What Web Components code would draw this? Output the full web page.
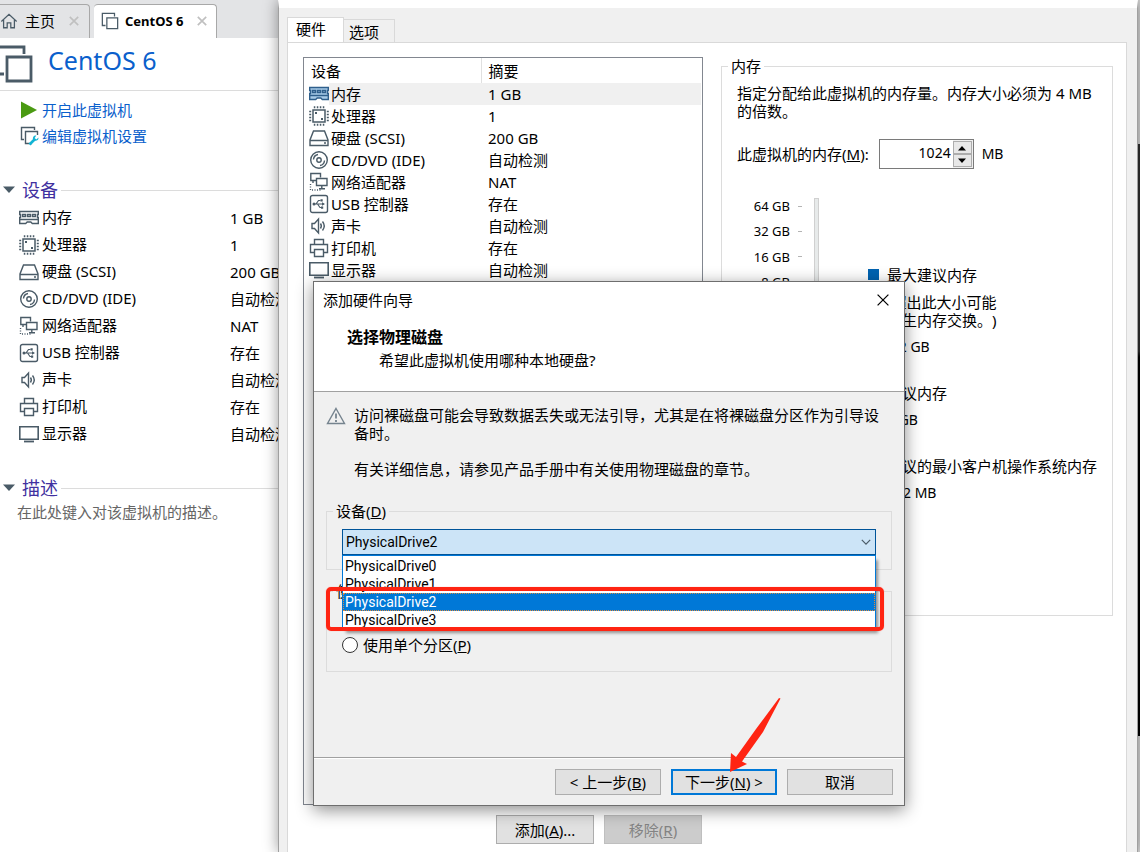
<!DOCTYPE html>
<html lang="zh-CN">
<head>
<meta charset="utf-8">
<title>CentOS 6</title>
<style>
  html, body { margin: 0; height: 100%; overflow: hidden; }
  body {
    font: 15px/18px "Noto Sans", "Noto Sans CJK SC", sans-serif;
    text-spacing-trim: space-all;
    color: #000;
    background: #fff;
  }
</style>
</head>
<body>
<vm-workstation></vm-workstation>

<script>
const ICONS = {
  home: '<path d="M1.5 10.500 10 2.500l8.500 8M4 9v8.500h4v-5.500h4v5.500h4V9" />',
  vm: '<path d="M5 15H1.500V1.500H15V5"/><path d="M6.500 6.500h12v12h-12z"/>',
  play: '<path fill="#4a9a12" stroke="none" d="M1 1.500v17L17 10z"/>',
  edit: '<path d="M4 13.500H1.500v-12h13V4"/><path d="M12 17.500H5.500v-12h12V9"/><path stroke="#12b4d4" stroke-width="2.600" d="M9.500 18.500l5-5"/><path fill="#12b4d4" stroke="none" d="M18.500 11.500l-2.200 2-1.600-1.500 1.600-2.500c-2.500-.3-4 2-3.200 4 .8 1.800 5.800 2 5.400-2z"/>',
  memory: '<path fill="var(--icon-fill, none)" d="M.7 3.500h18.600v3h-.8v3h.8v6h-6l-1.500-1.500h-3.600l-1.500 1.500h-6v-6h.8v-3h-.8z"/><path d="M3.500 6.500h3v2h-3zM8.500 6.500h3v2h-3zM13.500 6.500h3v2h-3zM1 11.500h18"/>',
  cpu: '<path stroke-width="1.500" d="M4 4h12v12H4z"/><path stroke-width="2" stroke-dasharray="1.500 1.500" d="M4.800 1.200h10.500M4.800 18.800h10.500M1.200 4.800v10.500M18.800 4.800v10.500"/><path stroke="none" fill="currentColor" d="M6 6h2v2H6zM12 12h2v2h-2z"/>',
  disk: '<path d="M4.500 3h11L19 12v5.500H1V12z"/><path d="M1 12.500h18M15 15h2"/>',
  disc: '<circle cx="10" cy="10" r="8.300"/><circle cx="10" cy="10" r="2.200"/><path d="M4.500 9.500c.2-2.500 2-4.600 4.500-5M15.500 10.500c-.2 2.500-2 4.600-4.500 5"/>',
  network: '<path d="M8 8.500H1.800V1.500h9.700v4"/><path d="M7.500 6.500h10.500v7H7.500zM12.800 13.500v3M10 16.800h6M4 8.500v2.500"/><path stroke-dasharray="1 1.500" d="M1.500 12v6H12"/>',
  usb: '<rect x="1.500" y="1.500" width="17" height="17" rx="2"/><path stroke-width="1.200" d="M4.500 10h10M7 10l2.500-3.500h2M8.500 10l2.500 3.500h1.500"/><path stroke="none" fill="currentColor" d="M13 8.300l3 1.700-3 1.700zM11.500 5.300h2.200v2.200h-2.200zM12 12.500h2.200v2.200H12z"/><circle cx="5" cy="10" r=".8"/>',
  sound: '<path d="M3 7.500h2.500l4-4.500v14l-4-4.500H3zM11.500 7.500c1 1.500 1 3.500 0 5M13.500 5.500c2.200 2.800 2.200 6.200 0 9"/>',
  printer: '<path d="M5.500 6V1.500h9V6M5 14.500H1.500v-8h17v8H15M5.500 11.500h9v7h-9z"/>',
  display: '<path stroke-width="1.600" d="M.8 2.800h18.400v12.400H.8z"/><path stroke-width="1.800" d="M5 17.500h10"/>',
  warning: '<path d="M10 2.500 18.500 17.500H1.500z"/><path stroke-width="1.800" d="M10 7.500v5M10 14v2"/>',
  close: '<path d="M4 4l12 12M16 4 4 16"/>',
  chevron: '<path d="M3 6.500l7 7 7-7"/>',
  caret: '<path fill="currentColor" stroke="none" d="M0 4h20L10 15z"/>'
};

const DEVICES = [
  ['memory', '内存', '1 GB'],
  ['cpu', '处理器', '1'],
  ['disk', '硬盘 (SCSI)', '200 GB'],
  ['disc', 'CD/DVD (IDE)', '自动检测'],
  ['network', '网络适配器', 'NAT'],
  ['usb', 'USB 控制器', '存在'],
  ['sound', '声卡', '自动检测'],
  ['printer', '打印机', '存在'],
  ['display', '显示器', '自动检测']
];

const SCALE = ['64 GB', '32 GB', '16 GB', '8 GB'];

// Base class: opens the shadow root and fills it from render()
class VmElement extends HTMLElement {
  constructor() {
    super();
    this.attachShadow({ mode: 'open' });
  }

  connectedCallback() {
    this.shadowRoot.innerHTML = this.render();
  }
}

class VmIcon extends VmElement {
  render() {
    return `
      <style>
        :host { display: inline-block; flex: none; width: 20px; height: 20px; color: #4a5b67; }
        svg { display: block; width: 100%; height: 100%; stroke-width: var(--stroke, 1.4); }
      </style>
      <svg viewBox="0 0 20 20" fill="none" stroke="currentColor" aria-hidden="true">
        ${ICONS[this.getAttribute('name')]}
      </svg>
    `;
  }
}

class PushButton extends VmElement {
  render() {
    return `
      <style>
        :host { display: block; width: 106px; height: 26px; }
        button {
          width: 100%;
          height: 100%;
          padding: 0;
          border: 1px solid #adadad;
          background: #e1e1e1;
          font: inherit;
          color: #000;
        }
        :host([primary]) button { border: 2px solid #0078d7; }
        button:disabled { background: #ccc; border-color: #bfbfbf; color: #838383; }
      </style>
      <button type="button" ${this.hasAttribute('disabled') ? 'disabled' : ''}><slot></slot></button>
    `;
  }
}

class GroupBox extends VmElement {
  render() {
    return `
      <style>
        :host { display: block; min-width: 0; }
        fieldset {
          min-width: 0;
          margin: 0;
          padding: 9px 15px 14px;
          border: 1px solid #dcdcdc;
        }
        legend { margin-left: -9px; padding: 0 3px; }
      </style>
      <fieldset>
        <legend><slot name="legend"></slot></legend>
        <slot></slot>
      </fieldset>
    `;
  }
}

class DeviceTable extends VmElement {
  render() {
    const head = this.hasAttribute('header')
      ? '<thead><tr><th>设备</th><th>摘要</th></tr></thead>' : '';
    const rows = DEVICES.map(([icon, name, value], i) => `
      <tr class="${i === 0 ? 'first' : ''}">
        <td><div><vm-icon name="${icon}"></vm-icon><span>${name}</span></div></td>
        <td><span>${value}</span></td>
      </tr>`).join('');
    return `
      <style>
        :host { display: block; }
        table { width: 100%; border-collapse: collapse; table-layout: fixed; }
        th, td { padding: 0; height: var(--row, 27px); text-align: left; font-weight: normal; white-space: nowrap; }
        th { height: 25px; padding-left: 7px; }
        th:first-child { border-right: 1px solid #e0e0e0; }
        tr > :first-child { width: var(--name-width, 230px); box-sizing: border-box; }
        td div { display: flex; align-items: center; height: var(--row, 27px); }
        td div span { flex: 1; padding-left: var(--gap, 3px); line-height: var(--row, 27px); }
        td:first-child { padding-left: var(--inset, 19px); }
        td + td { padding-left: var(--value-inset, 0); }
        :host([header]) .first { --icon-fill: #a9cbe8; }
        :host([header]) .first vm-icon { color: #2f5f8c; }
        :host([header]) .first div span, :host([header]) .first td + td { background: #f0f0f0; }
      </style>
      <table>${head}<tbody>${rows}</tbody></table>
    `;
  }
}

class VmTab extends VmElement {
  render() {
    return `
      <style>
        :host {
          display: flex;
          align-items: center;
          box-sizing: border-box;
          height: 34px;
          padding-bottom: 2px;
          border: 1px solid #a8a8a8;
          border-width: 1px 1px 0 0;
          border-radius: 0 4px 0 0;
          white-space: nowrap;
        }
        :host([active]) { background: #fff; border-radius: 4px 4px 0 0; font-weight: bold; font-size: 13px; }
        button { display: flex; margin-left: 12px; padding: 0; border: 0; background: none; }
        button vm-icon { --stroke: 2.400; width: 14px; height: 14px; color: #c0c0c0; }
      </style>
      <slot></slot>
      <button type="button" aria-label="关闭"><vm-icon name="close"></vm-icon></button>
    `;
  }
}

class VmSection extends VmElement {
  render() {
    return `
      <style>
        :host { display: block; margin-top: 28px; }
        summary {
          display: flex;
          align-items: center;
          gap: 7px;
          height: 26px;
          padding-left: 3px;
          margin-bottom: 1px;
          list-style: none;
          font-size: 18px;
          color: #4030a0;
        }
        summary vm-icon { width: 12px; height: 12px; }
        summary::after { content: ""; flex: 1; margin-left: -4px; border-top: 1px solid #dcdcdc; }
      </style>
      <details open>
        <summary><vm-icon name="caret"></vm-icon>${this.getAttribute('title')}</summary>
        <slot></slot>
      </details>
    `;
  }
}

class LibraryPane extends VmElement {
  render() {
    return `
      <style>
        :host { display: block; min-width: 0; }
        .tabs { display: flex; align-items: flex-end; gap: 4px; height: 38px; background: #e3e4e6; }
        .tabs vm-tab { padding-right: 7px; }
        .home { width: 90px; box-sizing: border-box; }
        .home vm-icon { width: 18px; height: 18px; margin-right: 7px; }
        .current { padding-left: 7px; }
        .current > vm-icon { width: 18px; height: 18px; margin-right: 6px; }
        header {
          display: flex;
          align-items: center;
          gap: 14px;
          height: 52px;
          border-bottom: 1px solid #dcdcdc;
          overflow: hidden;
        }
        header vm-icon { width: 40px; height: 40px; margin-left: -6px; }
        h1 { margin: 0 0 8px; font-size: 25px; font-weight: normal; line-height: 36px; color: #0a60cc; }
        nav { padding-top: 6px; }
        nav a {
          display: flex;
          align-items: center;
          gap: 2px;
          height: 26px;
          padding-left: 20px;
          color: #0a60cc;
          text-decoration: none;
        }
        p { margin: 0; padding-left: 17px; line-height: 20px; color: #666; }
      </style>
      <div class="tabs">
        <vm-tab class="home"><vm-icon name="home"></vm-icon>主页</vm-tab>
        <vm-tab class="current" active><vm-icon name="vm"></vm-icon>CentOS 6</vm-tab>
      </div>
      <header><vm-icon name="vm"></vm-icon><h1>CentOS 6</h1></header>
      <nav>
        <a href="#start"><vm-icon name="play"></vm-icon>开启此虚拟机</a>
        <a href="#edit"><vm-icon name="edit"></vm-icon>编辑虚拟机设置</a>
      </nav>
      <vm-section title="设备"><device-table></device-table></vm-section>
      <vm-section title="描述"><p>在此处键入对该虚拟机的描述。</p></vm-section>
    `;
  }
}

class MemoryPanel extends VmElement {
  render() {
    return `
      <style>
        :host { display: block; }
        p { margin: 0 0 19px; }
        .amount { display: flex; align-items: center; height: 30px; margin-bottom: 29px; }
        .spin {
          display: grid;
          grid-template-columns: 1fr 20px;
          box-sizing: border-box;
          width: 95px;
          height: 30px;
          margin: 0 8px 0 10px;
          border: 1px solid #7a7a7a;
        }
        .spin input {
          min-width: 0;
          padding: 0 2px 3px;
          border: 0;
          outline: 0;
          font: inherit;
          font-size: 14px;
          text-align: right;
        }
        .arrows { display: grid; grid-template-rows: 1fr 1fr; padding: 1px 1px 1px 0; background: #f0f0f0; }
        .arrows button {
          display: flex;
          align-items: center;
          justify-content: center;
          min-height: 0;
          padding: 0;
          border: 1px solid #adadad;
          background: #e8e8e8;
        }
        .arrows vm-icon { width: 8px; height: 8px; color: #000; }
        .arrows button:first-child vm-icon { transform: rotate(180deg); }
        .unit { font-size: 14px; }
        .chart { display: flex; align-items: flex-start; padding-bottom: 28px; }
        ol {
          display: flex;
          flex-direction: column;
          justify-content: space-between;
          height: 92px;
          width: 65px;
          margin: 0 12px 0 0;
          padding: 0;
          list-style: none;
          font-size: 13px;
        }
        li { display: flex; justify-content: flex-end; align-items: center; gap: 8px; height: 16px; }
        li::after { content: ""; width: 4px; height: 1px; background: #b4b4b4; }
        .track { box-sizing: border-box; width: 5px; height: 375px; border: 1px solid #d0d0d0; background: #e7eaea; }
        dl { flex: 1; margin: 0; padding: 68px 0 0 68px; white-space: nowrap; }
        dt { position: relative; }
        dt::before {
          content: "";
          position: absolute;
          left: -19px;
          top: 3px;
          width: 11px;
          height: 11px;
          background: var(--mark);
        }
        dd { margin: 9px 0 0; font-size: 14px; }
        dd.note { font-size: 15px; }
        dd + dt { margin-top: 28px; }
      </style>
      <group-box>
        <span slot="legend">内存</span>
        <p>指定分配给此虚拟机的内存量。内存大小必须为 4 MB 的倍数。</p>
        <div class="amount">
          <label for="size">此虚拟机的内存(<u>M</u>):</label>
          <div class="spin">
            <input id="size" type="text" inputmode="numeric" value="1024">
            <div class="arrows">
              <button type="button" aria-label="增加"><vm-icon name="caret"></vm-icon></button>
              <button type="button" aria-label="减少"><vm-icon name="caret"></vm-icon></button>
            </div>
          </div>
          <span class="unit">MB</span>
        </div>
        <div class="chart">
          <ol>${SCALE.map(text => `<li>${text}</li>`).join('')}</ol>
          <div class="track"></div>
          <dl>
            <dt style="--mark: #0063b1">最大建议内存</dt>
            <dd class="note">(超出此大小可能<br>发生内存交换。)</dd>
            <dd>6.2 GB</dd>
            <dt style="--mark: #5eb715">建议内存</dt>
            <dd>1 GB</dd>
            <dt style="--mark: #f5b800">建议的最小客户机操作系统内存</dt>
            <dd>512 MB</dd>
          </dl>
        </div>
      </group-box>
    `;
  }
}

class SettingsWindow extends VmElement {
  render() {
    return `
      <style>
        :host {
          display: flex;
          flex-direction: column;
          box-sizing: border-box;
          border: 1px solid #a0a0a0;
          border-width: 0 1px;
          border-top: 8px solid #fff;
          background: #f0f0f0;
          box-shadow: 0 0 14px rgba(0, 0, 0, .4);
          padding: 9px 10px 0 8px;
        }
        .tabs { display: flex; align-items: flex-end; height: 25px; }
        .tabs button {
          box-sizing: border-box;
          width: 51px;
          height: 23px;
          padding: 1px 8px 0 5px;
          border: 1px solid #d9d9d9;
          border-width: 1px 1px 0 0;
          background: #f0f0f0;
          font: inherit;
          color: #000;
          text-align: left;
          white-space: nowrap;
        }
        .tabs button[aria-selected=true] {
          width: 57px;
          height: 26px;
          margin-bottom: -1px;
          padding: 0 8px 3px;
          border-left-width: 1px;
          background: #fff;
        }
        .panel {
          flex: 1;
          display: grid;
          grid-template-columns: minmax(0, 400px) minmax(0, 1fr);
          gap: 18px;
          padding: 14px 13px 8px 15px;
          border: 1px solid #d9d9d9;
          border-bottom: 0;
          background: #fff;
        }
        .left { display: flex; flex-direction: column; gap: 10px; }
        device-table {
          --row: 22px;
          --name-width: 177px;
          --inset: 5px;
          --gap: 2px;
          --value-inset: 7px;
          flex: 1;
          padding-right: 1px;
          border: 1px solid #828790;
        }
        .actions { display: flex; justify-content: flex-end; gap: 10px; padding-right: 1px; }
        .actions push-button { width: 98px; height: 29px; }
      </style>
      <div class="tabs" role="tablist">
        <button type="button" role="tab" aria-selected="true">硬件</button>
        <button type="button" role="tab" aria-selected="false">选项</button>
      </div>
      <div class="panel">
        <div class="left">
          <device-table header></device-table>
          <div class="actions">
            <push-button>添加(<u>A</u>)...</push-button>
            <push-button disabled>移除(<u>R</u>)</push-button>
          </div>
        </div>
        <memory-panel></memory-panel>
      </div>
    `;
  }
}

class DrivePicker extends VmElement {
  render() {
    const drives = [0, 1, 2, 3].map(n => `PhysicalDrive${n}`);
    return `
      <style>
        :host { display: block; }
        .combo { position: relative; z-index: 1; font-family: Roboto, "Noto Sans", sans-serif; font-size: 14px; }
        select {
          display: block;
          appearance: none;
          box-sizing: border-box;
          width: 100%;
          height: 26px;
          padding: 0 3px;
          border: 1px solid #005499;
          border-radius: 0;
          background: #cce4f7;
          font: inherit;
          color: #000;
        }
        .combo > vm-icon { --stroke: 2; position: absolute; right: 4px; top: 7px; width: 12px; height: 12px; }
        ul {
          position: absolute;
          left: 0;
          right: 0;
          top: 26px;
          margin: 0;
          padding: 1px 0 0;
          border: 1px solid #0078d7;
          background: #fff;
          box-shadow: 3px 4px 3px -1px rgba(0, 0, 0, .4);
          list-style: none;
        }
        li { height: 18px; padding-left: 2px; }
        li[aria-selected=true] {
          background: #0078d7;
          color: #fff;
          outline: 1px dotted #e08a3c;
          outline-offset: -1px;
        }
        /* red frame over the last two drives */
        .mark {
          position: absolute;
          left: -16px;
          right: -8px;
          top: 58px;
          box-sizing: border-box;
          height: 44px;
          border: 4px solid #ff2412;
          border-radius: 5px;
          box-shadow: 0 0 1px #ff8a80;
        }
      </style>
      <group-box>
        <label slot="legend" for="drive">设备(<u>D</u>)</label>
        <div class="combo">
          <select id="drive">
            ${drives.map((d, i) => `<option ${i === 2 ? 'selected' : ''}>${d}</option>`).join('')}
          </select>
          <vm-icon name="chevron"></vm-icon>
          <ul role="listbox">
            ${drives.map((d, i) => `<li role="option" aria-selected="${i === 2}">${d}</li>`).join('')}
          </ul>
          <div class="mark"></div>
        </div>
      </group-box>
    `;
  }
}

class HardwareWizard extends VmElement {
  render() {
    return `
      <style>
        :host {
          display: flex;
          flex-direction: column;
          box-sizing: border-box;
          border: 1px solid #6e6e6e;
          background: #f0f0f0;
          box-shadow: 0 4px 16px rgba(0, 0, 0, .45);
        }
        header { padding-bottom: 22px; border-bottom: 1px solid #a0a0a0; background: #fff; }
        .title { display: flex; align-items: center; justify-content: space-between; height: 36px; padding: 0 12px 0 9px; }
        .title button { display: flex; padding: 0; border: 0; background: none; }
        .title vm-icon { width: 18px; height: 18px; color: #000; }
        h2 { margin: 9px 0 4px 33px; font-size: 16px; line-height: 20px; }
        header p { margin: 0 0 0 65px; }
        main { flex: 1; padding: 14px 12px; }
        .notice { display: grid; grid-template-columns: 28px 1fr; margin-bottom: 24px; }
        .notice vm-icon { width: 20px; height: 20px; color: #75838e; }
        .notice p { margin: 0 0 18px; }
        .notice p:last-child { margin: 0; }
        .usage { display: block; margin-top: 12px; }
        .usage label { display: flex; align-items: center; gap: 5px; height: 24px; }
        input[type=radio] {
          appearance: none;
          box-sizing: border-box;
          width: 16px;
          height: 16px;
          margin: 0;
          border: 1px solid #333;
          border-radius: 50%;
          background: #fff;
        }
        footer {
          position: relative;
          display: flex;
          justify-content: flex-end;
          gap: 10px;
          padding: 11px 11px 10px;
          border-top: 1px solid #a0a0a0;
          box-shadow: inset 0 1px #fff;
        }
        .arrow { position: absolute; right: 123px; bottom: 32px; width: 52px; height: 76px; }
      </style>
      <header>
        <div class="title">
          添加硬件向导
          <button type="button" aria-label="关闭"><vm-icon name="close"></vm-icon></button>
        </div>
        <h2>选择物理磁盘</h2>
        <p>希望此虚拟机使用哪种本地硬盘?</p>
      </header>
      <main>
        <div class="notice">
          <vm-icon name="warning"></vm-icon>
          <div>
            <p>访问裸磁盘可能会导致数据丢失或无法引导，尤其是在将裸磁盘分区作为引导设备时。</p>
            <p>有关详细信息，请参见产品手册中有关使用物理磁盘的章节。</p>
          </div>
        </div>
        <drive-picker></drive-picker>
        <group-box class="usage">
          <span slot="legend">使用</span>
          <label><input type="radio" name="usage" aria-label="使用整个磁盘"></label>
          <label><input type="radio" name="usage"><span>使用单个分区(<u>P</u>)</span></label>
        </group-box>
      </main>
      <footer>
        <push-button>&lt; 上一步(<u>B</u>)</push-button>
        <push-button primary>下一步(<u>N</u>) &gt;</push-button>
        <push-button>取消</push-button>
        <svg class="arrow" viewBox="0 0 52 76" aria-hidden="true">
          <path fill="#ff2412" d="M50 1 51.500 1.500 34 35 13 64.500 18 67 1 75 2 56 7 60 27 32z"/>
        </svg>
      </footer>
    `;
  }
}

class VmWorkstation extends VmElement {
  render() {
    return `
      <style>
        :host { display: grid; grid-template-columns: 1fr 3px; position: relative; height: 100vh; overflow: hidden; }
        .guest { display: grid; grid-template-rows: 144px 592px 1fr; background: #d6d6d6; }
        .guest div { grid-row: 2; background: linear-gradient(#303030 0 35%, #000 36%); }
        settings-window { position: absolute; left: 278px; right: 2px; top: 0; bottom: 0; }
        hardware-wizard { position: absolute; left: 313px; top: 281px; width: 592px; min-height: 525px; }
      </style>
      <library-pane></library-pane>
      <div class="guest"><div></div></div>
      <settings-window></settings-window>
      <hardware-wizard></hardware-wizard>
    `;
  }
}

customElements.define('vm-icon', VmIcon);
customElements.define('push-button', PushButton);
customElements.define('group-box', GroupBox);
customElements.define('device-table', DeviceTable);
customElements.define('vm-tab', VmTab);
customElements.define('vm-section', VmSection);
customElements.define('library-pane', LibraryPane);
customElements.define('memory-panel', MemoryPanel);
customElements.define('settings-window', SettingsWindow);
customElements.define('drive-picker', DrivePicker);
customElements.define('hardware-wizard', HardwareWizard);
customElements.define('vm-workstation', VmWorkstation);
</script>
</body>
</html>
